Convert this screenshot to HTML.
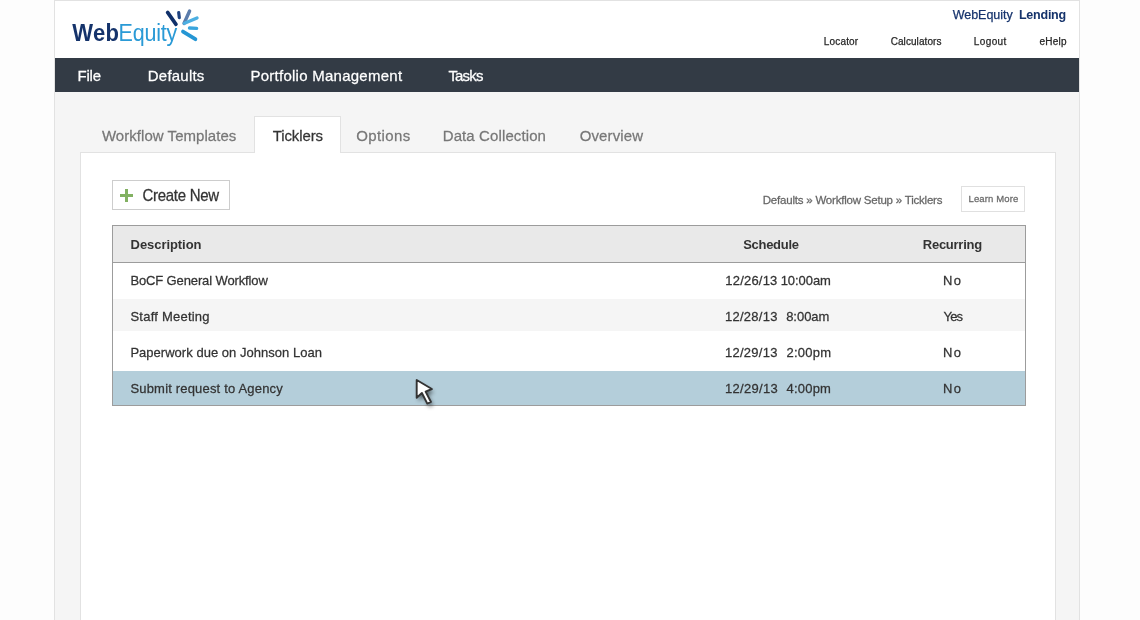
<!DOCTYPE html>
<html><head><meta charset="utf-8"><style>
*{margin:0;padding:0;box-sizing:border-box}
html,body{width:1140px;height:620px;overflow:hidden;background:#fdfdfd;font-family:"Liberation Sans",sans-serif}
.b{position:absolute}
.t{position:absolute;white-space:pre;opacity:0.999;-webkit-text-stroke:0.25px currentColor;font-family:"Liberation Sans",sans-serif}
</style></head>
<body>

<div class="b" style="left:54px;top:0;width:1026px;height:620px;border:1px solid #e2e2e2;border-bottom:none;background:#f5f5f5"></div>
<div class="b" style="left:55px;top:1px;width:1024px;height:57px;background:#ffffff"></div>
<div class="b" style="left:55px;top:58px;width:1024px;height:34px;background:#333b45"></div>
<div class="b" style="left:80px;top:152px;width:976px;height:470px;border:1px solid #e2e2e2;background:#fff"></div>
<div class="b" style="left:254px;top:116px;width:87px;height:37px;border:1px solid #e2e2e2;border-bottom:none;background:#fff"></div>
<div class="b" style="left:112px;top:180px;width:118px;height:30px;border:1px solid #cdcdcd;background:#fff"></div>
<div class="b" style="left:120px;top:194px;width:13px;height:3px;background:#82b162"></div>
<div class="b" style="left:125px;top:189px;width:3px;height:13px;background:#82b162"></div>
<div class="b" style="left:961px;top:186px;width:64px;height:26px;border:1px solid #e0e0e0;background:#fff"></div>
<div class="b" style="left:112px;top:225px;width:914px;height:181px;border:1px solid #9c9c9c;background:#fff"></div>
<div class="b" style="left:113px;top:226px;width:912px;height:36px;background:#e9e9e9"></div>
<div class="b" style="left:113px;top:262px;width:912px;height:1px;background:#9c9c9c"></div>
<div class="b" style="left:113px;top:299px;width:912px;height:32px;background:#f5f5f5"></div>
<div class="b" style="left:113px;top:371px;width:912px;height:34px;background:#b4ceda"></div>


<svg class="b" style="left:160px;top:5px" width="45" height="42" viewBox="160 5 45 42">
<g stroke-linecap="round" fill="none">
<line x1="167.6" y1="12.4" x2="176.0" y2="24.4" stroke="#10306a" stroke-width="3.6"/>
<line x1="178.7" y1="12.6" x2="179.3" y2="17.6" stroke="#1f4280" stroke-width="3.2"/>
<line x1="189.6" y1="11.0" x2="184.0" y2="23.5" stroke="#5b7cab" stroke-width="3.4"/>
<line x1="197.0" y1="18.0" x2="184.5" y2="23.3" stroke="#4cafe2" stroke-width="3.4"/>
<line x1="189.5" y1="28.0" x2="196.6" y2="28.4" stroke="#3aa5dd" stroke-width="3.4"/>
<line x1="183.0" y1="31.6" x2="195.4" y2="39.2" stroke="#2596d4" stroke-width="3.8"/>
</g></svg>

<div class="t" style="left:72.20px;top:23px;font-size:22px;line-height:22px;font-weight:700;color:#15336b;letter-spacing:0.400px;transform:scaleY(1.07);transform-origin:0 18px;-webkit-text-stroke:0px #15336b">Web</div>
<div class="t" style="left:118.50px;top:24px;font-size:21.5px;line-height:21.5px;font-weight:400;color:#2a9ad6;letter-spacing:-0.180px;transform:scaleY(1.07);transform-origin:0 17px;-webkit-text-stroke:0px #2a9ad6">Equity</div>
<div class="t" style="left:952.69px;top:9px;font-size:12.5px;line-height:12.5px;font-weight:400;color:#16336d;letter-spacing:-0.027px">WebEquity</div>
<div class="t" style="left:1018.96px;top:9px;font-size:12.5px;line-height:12.5px;font-weight:700;color:#15336b;letter-spacing:-0.232px;-webkit-text-stroke:0px #15336b">Lending</div>
<div class="t" style="left:823.84px;top:37px;font-size:10px;line-height:10px;font-weight:400;color:#262626;letter-spacing:0.166px">Locator</div>
<div class="t" style="left:890.66px;top:37px;font-size:10px;line-height:10px;font-weight:400;color:#262626;letter-spacing:0.079px">Calculators</div>
<div class="t" style="left:973.87px;top:37px;font-size:10px;line-height:10px;font-weight:400;color:#262626;letter-spacing:0.366px">Logout</div>
<div class="t" style="left:1039.51px;top:37px;font-size:10px;line-height:10px;font-weight:400;color:#262626;letter-spacing:0.212px">eHelp</div>
<div class="t" style="left:77.42px;top:68px;font-size:15px;line-height:15px;font-weight:400;color:#ffffff;letter-spacing:-0.155px;transform:scaleY(1.035);transform-origin:0 13px">File</div>
<div class="t" style="left:147.75px;top:68px;font-size:15px;line-height:15px;font-weight:400;color:#ffffff;letter-spacing:0.226px;transform:scaleY(1.035);transform-origin:0 13px">Defaults</div>
<div class="t" style="left:250.45px;top:68px;font-size:15px;line-height:15px;font-weight:400;color:#ffffff;letter-spacing:0.256px;transform:scaleY(1.035);transform-origin:0 13px">Portfolio Management</div>
<div class="t" style="left:448.40px;top:68px;font-size:15px;line-height:15px;font-weight:400;color:#ffffff;letter-spacing:-0.814px;transform:scaleY(1.035);transform-origin:0 13px">Tasks</div>
<div class="t" style="left:101.88px;top:128px;font-size:15px;line-height:15px;font-weight:400;color:#777777;letter-spacing:0.046px;transform:scaleY(1.02);transform-origin:0 13px">Workflow Templates</div>
<div class="t" style="left:272.80px;top:128px;font-size:15px;line-height:15px;font-weight:400;color:#333333;letter-spacing:-0.127px;transform:scaleY(1.02);transform-origin:0 13px">Ticklers</div>
<div class="t" style="left:356.20px;top:128px;font-size:15px;line-height:15px;font-weight:400;color:#777777;letter-spacing:0.403px;transform:scaleY(1.02);transform-origin:0 13px">Options</div>
<div class="t" style="left:442.70px;top:128px;font-size:15px;line-height:15px;font-weight:400;color:#777777;letter-spacing:0.111px;transform:scaleY(1.02);transform-origin:0 13px">Data Collection</div>
<div class="t" style="left:579.65px;top:128px;font-size:15px;line-height:15px;font-weight:400;color:#777777;letter-spacing:0.134px;transform:scaleY(1.02);transform-origin:0 13px">Overview</div>
<div class="t" style="left:142.50px;top:188px;font-size:15px;line-height:15px;font-weight:400;color:#333333;letter-spacing:-0.287px;transform:scaleY(1.08);transform-origin:0 13px">Create New</div>
<div class="t" style="left:762.75px;top:195px;font-size:11.5px;line-height:11.5px;font-weight:400;color:#666666;letter-spacing:-0.210px;transform:scaleY(1.02);transform-origin:0 9px">Defaults » Workflow Setup » Ticklers</div>
<div class="t" style="left:968.55px;top:194px;font-size:9.5px;line-height:9.5px;font-weight:400;color:#6a6a6a;letter-spacing:0.130px;transform:scaleY(1.05);transform-origin:0 8px">Learn More</div>
<div class="t" style="left:130.55px;top:238px;font-size:13px;line-height:13px;font-weight:700;color:#333333;letter-spacing:-0.058px;transform:scaleY(1.05);transform-origin:0 11px;-webkit-text-stroke:0px #333333">Description</div>
<div class="t" style="left:743.22px;top:238px;font-size:13px;line-height:13px;font-weight:700;color:#333333;letter-spacing:-0.298px;transform:scaleY(1.05);transform-origin:0 11px;-webkit-text-stroke:0px #333333">Schedule</div>
<div class="t" style="left:922.79px;top:238px;font-size:13px;line-height:13px;font-weight:700;color:#333333;letter-spacing:-0.257px;transform:scaleY(1.05);transform-origin:0 11px;-webkit-text-stroke:0px #333333">Recurring</div>
<div class="t" style="left:130.40px;top:274px;font-size:13px;line-height:13px;font-weight:400;color:#333333;letter-spacing:-0.125px;transform:scaleY(1.05);transform-origin:0 11px">BoCF General Workflow</div>
<div class="t" style="left:130.45px;top:310px;font-size:13px;line-height:13px;font-weight:400;color:#333333;letter-spacing:0.229px;transform:scaleY(1.05);transform-origin:0 11px">Staff Meeting</div>
<div class="t" style="left:130.38px;top:346px;font-size:13px;line-height:13px;font-weight:400;color:#333333;letter-spacing:0.027px;transform:scaleY(1.05);transform-origin:0 11px">Paperwork due on Johnson Loan</div>
<div class="t" style="left:130.46px;top:382px;font-size:13px;line-height:13px;font-weight:400;color:#333333;letter-spacing:0.180px;transform:scaleY(1.05);transform-origin:0 11px">Submit request to Agency</div>
<div class="t" style="left:725.32px;top:274px;font-size:13px;line-height:13px;font-weight:400;color:#333333;letter-spacing:0.200px;transform:scaleY(1.05);transform-origin:0 11px">12/26/13</div>
<div class="t" style="left:780.63px;top:274px;font-size:13px;line-height:13px;font-weight:400;color:#333333;letter-spacing:-0.056px;transform:scaleY(1.05);transform-origin:0 11px">10:00am</div>
<div class="t" style="left:725.02px;top:310px;font-size:13px;line-height:13px;font-weight:400;color:#333333;letter-spacing:0.250px;transform:scaleY(1.05);transform-origin:0 11px">12/28/13</div>
<div class="t" style="left:786.16px;top:310px;font-size:13px;line-height:13px;font-weight:400;color:#333333;letter-spacing:-0.034px;transform:scaleY(1.05);transform-origin:0 11px">8:00am</div>
<div class="t" style="left:725.01px;top:346px;font-size:13px;line-height:13px;font-weight:400;color:#333333;letter-spacing:0.251px;transform:scaleY(1.05);transform-origin:0 11px">12/29/13</div>
<div class="t" style="left:786.41px;top:346px;font-size:13px;line-height:13px;font-weight:400;color:#333333;letter-spacing:0.257px;transform:scaleY(1.05);transform-origin:0 11px">2:00pm</div>
<div class="t" style="left:725.05px;top:382px;font-size:13px;line-height:13px;font-weight:400;color:#333333;letter-spacing:0.297px;transform:scaleY(1.05);transform-origin:0 11px">12/29/13</div>
<div class="t" style="left:786.57px;top:382px;font-size:13px;line-height:13px;font-weight:400;color:#333333;letter-spacing:0.191px;transform:scaleY(1.05);transform-origin:0 11px">4:00pm</div>
<div class="t" style="left:943.08px;top:274px;font-size:13px;line-height:13px;font-weight:400;color:#333333;letter-spacing:1.319px;transform:scaleY(1.05);transform-origin:0 11px">No</div>
<div class="t" style="left:943.62px;top:310px;font-size:13px;line-height:13px;font-weight:400;color:#333333;letter-spacing:-0.902px;transform:scaleY(1.05);transform-origin:0 11px">Yes</div>
<div class="t" style="left:943.08px;top:346px;font-size:13px;line-height:13px;font-weight:400;color:#333333;letter-spacing:1.319px;transform:scaleY(1.05);transform-origin:0 11px">No</div>
<div class="t" style="left:943.07px;top:382px;font-size:13px;line-height:13px;font-weight:400;color:#333333;letter-spacing:1.319px;transform:scaleY(1.05);transform-origin:0 11px">No</div>

<svg class="b" style="left:400px;top:370px" width="45" height="45" viewBox="400 370 45 45">
<defs><filter id="sh" x="-50%" y="-50%" width="200%" height="200%"><feGaussianBlur stdDeviation="2"/></filter></defs>
<path d="M416.7 380.0 L416.7 397.8 L421.9 393.0 L427.3 403.6 L431.0 402.0 L425.6 391.6 L431.9 389.0 Z" fill="#000" opacity="0.55" filter="url(#sh)" transform="translate(2,3.5)"/>
<path d="M416.7 380.0 L416.7 397.8 L421.9 393.0 L427.3 403.6 L431.0 402.0 L425.6 391.6 L431.9 389.0 Z" fill="#fff" stroke="#333" stroke-width="1.9" stroke-linejoin="round"/>
</svg>

</body></html>
